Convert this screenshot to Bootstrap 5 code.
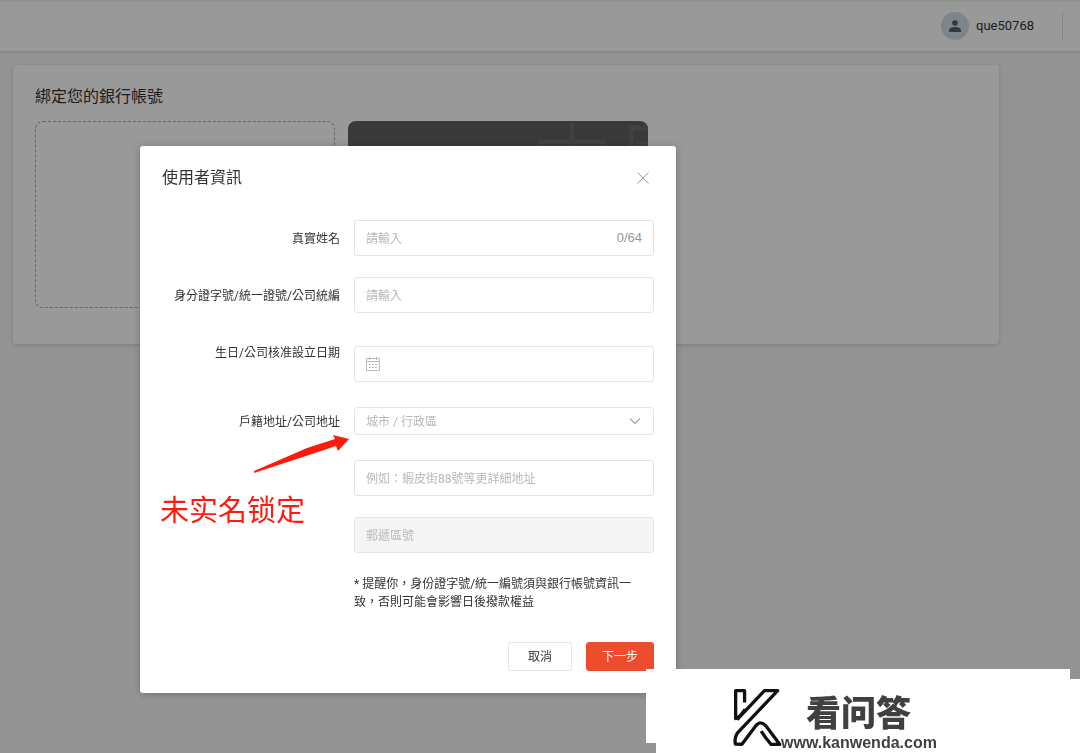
<!DOCTYPE html>
<html lang="zh-Hant">
<head>
<meta charset="utf-8">
<meta name="viewport" content="width=device-width, initial-scale=1">
<title>使用者資訊</title>
<link href="https://cdn.jsdelivr.net/npm/bootstrap@5.3.0/dist/css/bootstrap.min.css" rel="stylesheet">
<style>
body{background:#f6f6f6;color:#333;font-family:Roboto,"Liberation Sans","Noto Sans CJK TC",sans-serif;font-size:12px;line-height:18px;min-height:100vh;overflow:hidden}
.topbar{height:51px;border-top:2px solid #e3f5e6;box-shadow:0 1px 4px rgba(0,0,0,.14);padding:0 17px 2px 0}
.avatar{width:28px;height:28px;background:#d3dde3;margin-right:7px}
.user-name{font-size:13px}
.top-divider{width:1px;height:28px;background:#ddd;margin-left:28px}
.panel{margin:14px 81px 0 13px;padding:20px 22px 36px;border-radius:4px;box-shadow:0 1px 4px rgba(0,0,0,.16)}
.heading{font-size:16px;line-height:24px;font-weight:400;margin:0}
.panel .heading{margin-bottom:12px}
.accounts{gap:13px}
.account{width:300px;height:187px;border-radius:8px;overflow:hidden}
.account-add{border:1px dashed #aaa}
.account-bank{background:#606060}
.modal-backdrop{--bs-backdrop-opacity:.4}
.user-dialog{max-width:536px;margin:146px 0 0 140px}
.user-dialog .modal-content{border:0;border-radius:3px;padding:20px 22px 22px;box-shadow:0 1px 8px rgba(0,0,0,.25)}
.close-btn{width:22px;height:24px}
.user-form{display:grid;grid-template-columns:178px 1fr;column-gap:14px;row-gap:21px;margin-top:30px}
.user-form label{text-align:right;white-space:nowrap;padding-top:10px}
.user-form .field{grid-column:2}
.user-form .form-control,.user-form .form-select{font-size:12px;line-height:18px;border-color:#e5e5e5;border-radius:3px;height:36px;padding:2px 11px 0;color:#333}
.user-form .form-control::placeholder{color:#b8b8b8;opacity:1}
.user-form .form-control:disabled{background:#f5f5f5}
.user-form .form-select{height:28px;color:#b8b8b8;background-position:right 12px center;background-size:12px 12px;background-image:url("data:image/svg+xml,%3csvg xmlns='http://www.w3.org/2000/svg' viewBox='0 0 12 12'%3e%3cpath fill='none' stroke='%23aaa' stroke-width='1.3' d='M1 3.5l5 5 5-5'/%3e%3c/svg%3e")}
.user-form .name-box{border-right:0}
.user-form .count{font-family:"Liberation Sans",sans-serif;font-size:13px;background:#fff;border-color:#e5e5e5;border-radius:3px;color:#999;padding:0 11px}
.date-box{margin-top:12px}
.date-box .input-group-text{background:#fff;border-color:#e5e5e5;border-radius:3px;padding:0 0 0 11px}
.date-box .form-control{border-left:0}
.user-form .region{margin:4px 0}
.note{padding:1px 14px 0 0}
.actions{margin-top:31px;gap:14px}
.actions .btn{font-size:12px;line-height:17px;padding:6px 14px 4px;border-radius:3px}
.btn-cancel{--bs-btn-color:#333;--bs-btn-border-color:#e5e5e5;--bs-btn-bg:#fff;width:64px}
.btn-next{--bs-btn-color:#fff;--bs-btn-bg:#ee4d2d;--bs-btn-border-color:#ee4d2d;--bs-btn-hover-bg:#d94426;--bs-btn-hover-color:#fff;width:68px}
.callout{position:absolute;left:20px;top:288px;color:#ff1b0c;font-size:29px;line-height:38px;font-family:"Noto Sans CJK SC",sans-serif;pointer-events:none}
.callout svg{display:block;margin-left:92px}
.callout div{margin-top:15px}
.site-mark{position:fixed;right:10px;bottom:10px;width:424px;height:74px;z-index:1060;background:#fff;box-shadow:10px 10px 0 #fff;padding:16px 0 0 84px;color:#404040}
.site-mark svg{flex:none}
.site-name{font-family:"Noto Sans CJK SC",sans-serif;font-weight:900;font-size:35px;line-height:48px;margin:2px 0 0 23px}
.site-url{font-family:"Liberation Sans",sans-serif;font-weight:700;font-size:16px;line-height:18px;margin:-1px 0 0 -2px}
</style>
</head>
<body>
<header class="topbar bg-white d-flex align-items-center justify-content-end">
  <span class="avatar rounded-circle d-flex align-items-center justify-content-center">
    <svg width="12" height="12" viewBox="0 0 12 12" fill="#556068" aria-hidden="true"><circle cx="6" cy="3" r="2.8"/><path d="M0 12V10.500C0 8 3 7 6 7s6 1 6 3.500V12z"/></svg>
  </span>
  <span class="user-name">que50768</span>
  <span class="top-divider"></span>
</header>
<main class="panel bg-white">
  <h1 class="heading">綁定您的銀行帳號</h1>
  <div class="accounts d-flex">
    <div class="account account-add flex-shrink-0"></div>
    <div class="account account-bank flex-shrink-0">
      <svg width="300" height="187" viewBox="0 0 300 187" fill="none" stroke="#6b6b6b" stroke-width="5" aria-hidden="true"><path d="M224 2v90M192 70V21h64v49zM283 90V7h30M288 23h20"/></svg>
    </div>
  </div>
</main>

<div class="modal-backdrop show"></div>
<div class="modal show d-block" role="dialog" aria-labelledby="dialogTitle">
  <div class="modal-dialog user-dialog">
    <div class="modal-content">
      <div class="d-flex justify-content-between">
        <h2 class="heading" id="dialogTitle">使用者資訊</h2>
        <button type="button" class="close-btn btn p-0 border-0 d-flex align-items-center justify-content-center" aria-label="關閉"><svg width="12" height="12" viewBox="0 0 12 12" stroke="#999" fill="none"><path d="M.5.5l11 11m0-11l-11 11"/></svg></button>
      </div>
      <form class="user-form">
        <label for="realName">真實姓名</label>
        <div class="input-group field">
          <input id="realName" class="form-control name-box" placeholder="請輸入">
          <span class="input-group-text count">0/64</span>
        </div>
        <label for="idNo">身分證字號/統一證號/公司統編</label>
        <input id="idNo" class="form-control" placeholder="請輸入">
        <label for="birthday">生日/公司核准設立日期</label>
        <div class="input-group field date-box">
          <span class="input-group-text"><svg width="14" height="14" viewBox="0 0 14 14" stroke="#bbb" fill="none"><path d="M.5 1.500h13v12H.5zM.5 4.500h13M3.500 0v3M10.500 0v3"/><path d="M3 7.500h8M3 10.500h8" stroke-dasharray="2 1"/></svg></span>
          <input id="birthday" class="form-control">
        </div>
        <label for="region">戶籍地址/公司地址</label>
        <select id="region" class="form-select region"><option>城市 / 行政區</option></select>
        <input class="form-control field" aria-label="詳細地址" placeholder="例如：蝦皮街88號等更詳細地址">
        <input class="form-control field" aria-label="郵遞區號" placeholder="郵遞區號" disabled>
        <p class="field note mb-0">* 提醒你，身份證字號/統一編號須與銀行帳號資訊一致，否則可能會影響日後撥款權益</p>
      </form>
      <div class="actions d-flex justify-content-end">
        <button type="button" class="btn btn-cancel">取消</button>
        <button type="button" class="btn btn-next">下一步</button>
      </div>
      <div class="callout">
        <svg width="98" height="40" viewBox="0 0 98 40" fill="#ff1b0c" aria-hidden="true"><path d="M2 37L55 14 83 5 81 1 97 5 86 17 84 12 60 20 2 39z"/></svg>
        <div>未实名锁定</div>
      </div>
    </div>
  </div>
</div>

<aside class="site-mark">
  <div class="d-flex align-items-start">
    <svg width="53" height="63" viewBox="30 55 160 190" fill="none" stroke="#111" stroke-width="10" stroke-linejoin="round" aria-hidden="true"><path d="M74 108V72H47V156L62 148 134 72H174L52 200Q43 215 46 233L66 234 108 178Q122 160 138 178L180 234H154Q138 216 124 194"/><path d="M52 160L76 128" stroke-width="10"/></svg>
    <div>
      <div class="site-name">看问答</div>
      <div class="site-url">www.kanwenda.com</div>
    </div>
  </div>
</aside>
<script src="https://cdn.jsdelivr.net/npm/bootstrap@5.3.0/dist/js/bootstrap.bundle.min.js"></script>
</body>
</html>
